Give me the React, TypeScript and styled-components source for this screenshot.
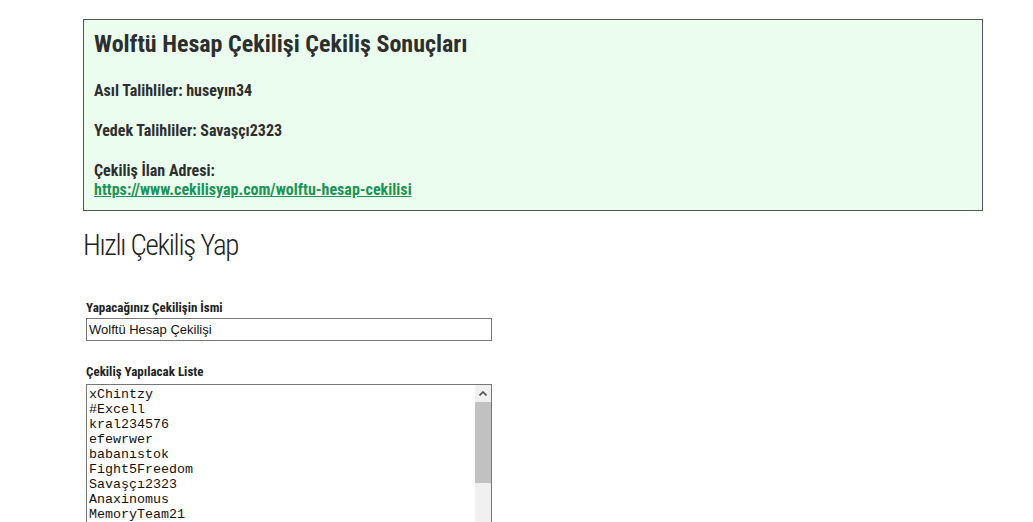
import React from 'react'
import styled, { createGlobalStyle } from 'styled-components'

const GlobalStyle = createGlobalStyle`
  html, body {
    margin: 0;
    padding: 0;
    background: #fff;
  }
  body {
    font-family: Roboto, "Noto Sans", sans-serif;
    color: #333;
  }
`

const entries = [
  'xChintzy',
  '#Excell',
  'kral234576',
  'efewrwer',
  'babanıstok',
  'Fight5Freedom',
  'Savaşçı2323',
  'Anaxinomus',
  'MemoryTeam21',
]

const Page = styled.div`
  width: 900px;
  padding: 19px 0 0 83px;
`

const ResultBox = styled.div`
  border: 1px solid #555;
  background: #ebfdee;
  padding: 9px 10px 11px;
`

const Title = styled.h2`
  margin: 0;
  font-size: 24px;
  line-height: 30px;
  font-weight: 700;
  font-stretch: condensed;
  color: #2e2e2e;
`

const Line = styled.p`
  margin: 22px 0 0;
  font-size: 16px;
  line-height: 19px;
  font-weight: 700;
  font-stretch: condensed;
  color: #2e2e2e;

  & + & {
    margin-top: 21px;
  }
`

const Link = styled.a`
  color: #1c9456;
  text-decoration: underline;
`

const Heading = styled.h1`
  margin: 17px 0 0;
  font-size: 29px;
  line-height: 34px;
  font-weight: 300;
  font-stretch: condensed;
  letter-spacing: -1.3px;
  color: #222;
`

const Form = styled.div`
  padding-left: 3px;
  margin-top: 38px;
  display: flex;
  flex-direction: column;
`

const Label = styled.label<{ $gap?: number }>`
  display: block;
  margin-top: ${({ $gap }) => $gap ?? 0}px;
  font-size: 13px;
  line-height: 15px;
  font-weight: 700;
  font-stretch: condensed;
  color: #222;
`

const TextInput = styled.input`
  box-sizing: border-box;
  margin-top: 3px;
  width: 406px;
  height: 23px;
  border: 1px solid #767676;
  padding: 0 2px;
  font-family: "Liberation Sans", Arial, sans-serif;
  font-size: 13px;
  color: #111;
  outline: none;
`

const AreaWrap = styled.div`
  position: relative;
  margin-top: 5px;
  width: 406px;
`

const ListArea = styled.textarea`
  box-sizing: border-box;
  display: block;
  width: 406px;
  height: 200px;
  border: 1px solid #767676;
  padding: 2px 2px;
  resize: none;
  overflow: hidden;
  font-family: "Liberation Mono", "Courier New", monospace;
  font-size: 13.33px;
  line-height: 15px;
  color: #111;
  outline: none;
`

const ScrollTrack = styled.div`
  position: absolute;
  top: 1px;
  right: 1px;
  bottom: 1px;
  width: 16px;
  background: #f0f0f0;
  display: flex;
  flex-direction: column;
`

const ScrollButton = styled.div`
  height: 17px;
  display: flex;
  align-items: center;
  justify-content: center;
`

const ScrollThumb = styled.div`
  height: 81px;
  background: #c1c1c1;
`

const App = () => {
  return (
    <>
      <GlobalStyle />
      <Page>
        <ResultBox>
          <Title>Wolftü Hesap Çekilişi Çekiliş Sonuçları</Title>
          <Line>Asıl Talihliler: huseyın34</Line>
          <Line>Yedek Talihliler: Savaşçı2323</Line>
          <Line>
            Çekiliş İlan Adresi:
            <br />
            <Link href="#">https://www.cekilisyap.com/wolftu-hesap-cekilisi</Link>
          </Line>
        </ResultBox>

        <Heading>Hızlı Çekiliş Yap</Heading>

        <Form>
          <Label>Yapacağınız Çekilişin İsmi</Label>
          <TextInput defaultValue="Wolftü Hesap Çekilişi" />

          <Label $gap={23}>Çekiliş Yapılacak Liste</Label>
          <AreaWrap>
            <ListArea defaultValue={entries.join('\n')} />
            <ScrollTrack>
              <ScrollButton>
                <svg width="8" height="5" viewBox="0 0 8 5">
                  <path d="M0.5 4.5 L4 1 L7.5 4.5" fill="none" stroke="#505050" strokeWidth="1.6" />
                </svg>
              </ScrollButton>
              <ScrollThumb />
            </ScrollTrack>
          </AreaWrap>
        </Form>
      </Page>
    </>
  )
}

export default App
